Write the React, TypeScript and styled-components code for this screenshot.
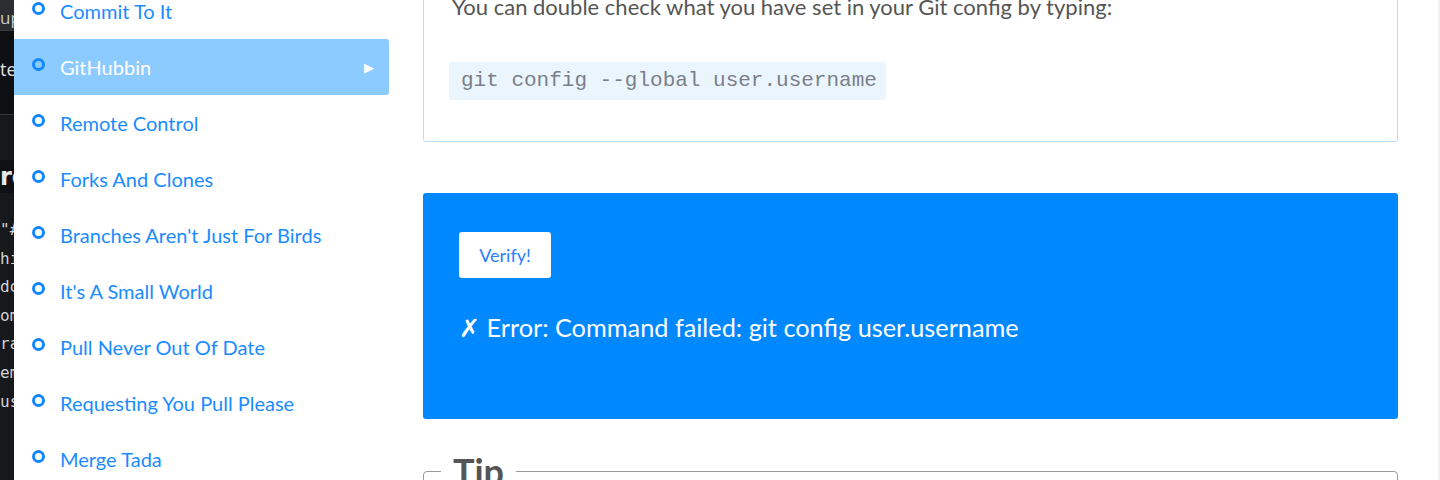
import React from "react";
import styled, { createGlobalStyle } from "styled-components";

const GlobalStyle = createGlobalStyle`
  html, body {
    margin: 0;
    padding: 0;
    background: #ffffff;
    overflow: hidden;
  }
  body {
    font-family: Lato, "Open Sans", sans-serif;
  }
`;

const lessons = [
  "Commit To It",
  "GitHubbin",
  "Remote Control",
  "Forks And Clones",
  "Branches Aren't Just For Birds",
  "It's A Small World",
  "Pull Never Out Of Date",
  "Requesting You Pull Please",
  "Merge Tada",
];

const terminalLines = ['"#', "hi", "do", "om", "ra", "em", "us"];

const App = () => {
  return (
    <>
      <GlobalStyle />
      <Page>
        <Terminal>
          <TermTitle>up</TermTitle>
          <TermTab>te</TermTab>
          <TermHeading>rc</TermHeading>
          <TermBody>
            {terminalLines.map((line) => (
              <TermLine key={line}>{line}</TermLine>
            ))}
          </TermBody>
        </Terminal>

        <Sidebar>
          {lessons.map((name) => (
            <LessonItem key={name} $active={name === "GitHubbin"}>
              <Ring />
              <LessonName>{name}</LessonName>
              {name === "GitHubbin" && <Arrow>▶</Arrow>}
            </LessonItem>
          ))}
        </Sidebar>

        <Main>
          <Card>
            <Paragraph>
              You can double check what you have set in your Git config by
              typing:
            </Paragraph>
            <Code>git config --global user.username</Code>
          </Card>

          <VerifyBox>
            <VerifyButton>Verify!</VerifyButton>
            <ErrorText>✗ Error: Command failed: git config user.username</ErrorText>
          </VerifyBox>

          <TipBox>
            <TipLegend>Tip</TipLegend>
          </TipBox>
        </Main>

        <Scrollbar />
      </Page>
    </>
  );
};

const Page = styled.div`
  display: grid;
  grid-template-columns: 14px 375px 1fr 2px;
  height: 480px;
  overflow: hidden;
`;

const Terminal = styled.div`
  display: flex;
  flex-direction: column;
  background: #16181c;
  overflow: hidden;
  white-space: nowrap;
  color: #d8d8d8;
`;

const TermTitle = styled.div`
  height: 30px;
  background: #2b2d31;
  font-family: "Open Sans", sans-serif;
  font-size: 17px;
  line-height: 36px;
  color: #c9c9c9;
  border-bottom: 1px solid #3a3c40;
`;

const TermTab = styled.div`
  height: 83px;
  background: #0d0f13;
  font-family: "Open Sans", sans-serif;
  font-size: 18px;
  line-height: 76px;
  color: #e0e0e0;
  border-bottom: 1px solid #34363a;
`;

const TermHeading = styled.div`
  margin-top: 45px;
  height: 33px;
  background: #0f1114;
  font-family: "DejaVu Sans", sans-serif;
  font-weight: bold;
  font-size: 24px;
  line-height: 34px;
  color: #e8e8e8;
`;

const TermBody = styled.div`
  padding-top: 23px;
  display: flex;
  flex-direction: column;
`;

const TermLine = styled.div`
  font-family: "DejaVu Sans Mono", monospace;
  font-size: 16px;
  line-height: 28.6px;
  color: #d4d4d4;
`;

const Sidebar = styled.nav`
  display: flex;
  flex-direction: column;
  margin-top: -17px;
`;

const LessonItem = styled.div<{ $active?: boolean }>`
  display: flex;
  align-items: center;
  height: 56px;
  flex-shrink: 0;
  padding: 0 15px 0 18px;
  border-radius: 0 3px 3px 0;
  background: ${(p) => (p.$active ? "#8ccbff" : "transparent")};
  color: ${(p) => (p.$active ? "#ffffff" : "#1a8cff")};
`;

const Ring = styled.span`
  width: 13px;
  height: 13px;
  box-sizing: border-box;
  border: 3px solid #1287ff;
  border-radius: 50%;
  margin-top: -6px;
  margin-right: 15px;
  flex-shrink: 0;
`;

const LessonName = styled.span`
  flex: 1;
  font-size: 20px;
`;

const Arrow = styled.span`
  font-size: 13px;
  color: #ffffff;
  font-family: "DejaVu Sans", sans-serif;
`;

const Main = styled.main`
  display: flex;
  flex-direction: column;
  padding: 0 40px 0 34px;
  margin-top: -30px;
`;

const Card = styled.section`
  border: 1px solid #b8dcf8;
  border-radius: 3px;
  padding: 20px 28px 41px;
`;

const Paragraph = styled.p`
  margin: 0 0 39px;
  font-size: 22px;
  line-height: 32px;
  color: #555555;
`;

const Code = styled.code`
  display: inline-block;
  margin-left: -3px;
  padding: 8px 9px 8px 12px;
  background: #ebf5fe;
  border-radius: 3px;
  font-family: "Liberation Mono", monospace;
  font-size: 21px;
  line-height: 22px;
  color: #7a7f8a;
`;

const VerifyBox = styled.section`
  margin-top: 51px;
  height: 226px;
  box-sizing: border-box;
  padding: 39px 36px;
  background: #0088ff;
  border-radius: 3px;
`;

const VerifyButton = styled.button`
  display: block;
  width: 92px;
  height: 46px;
  border: none;
  border-radius: 3px;
  background: #ffffff;
  color: #2a7dff;
  font-family: Lato, sans-serif;
  font-size: 18px;
`;

const ErrorText = styled.p`
  margin: 34px 0 0 0;
  font-size: 25.3px;
  line-height: 30px;
  color: #ffffff;
`;

const TipBox = styled.fieldset`
  margin: 30px 0 0;
  padding: 0 17px;
  height: 80px;
  border: 1px solid #9a9a9a;
  border-radius: 4px;
`;

const TipLegend = styled.legend`
  padding: 0 12px;
  font-size: 36px;
  font-weight: bold;
  color: #555555;
`;

const Scrollbar = styled.div`
  background: #f1f1f1;
`;

export default App;
